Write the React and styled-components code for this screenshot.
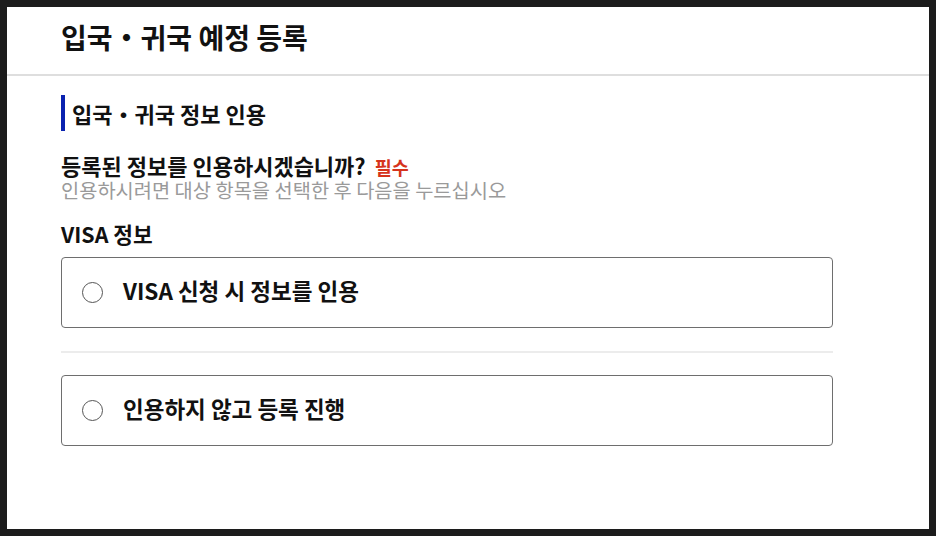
import React from "react";
import styled, { createGlobalStyle } from "styled-components";

const Global = createGlobalStyle`
  html, body { margin: 0; padding: 0; background: #1c1c1c; }
  body { font-family: "Noto Sans CJK KR", "Noto Sans", sans-serif; color: #111; }
  * { box-sizing: border-box; }
`;

const Frame = styled.div`
  width: 936px;
  height: 536px;
  padding: 7px;
  background: #1c1c1c;
`;

const Page = styled.div`
  width: 922px;
  height: 522px;
  background: #fff;
  display: flex;
  flex-direction: column;
`;

const Header = styled.header`
  height: 69px;
  display: flex;
  align-items: center;
  padding: 0 0 8px 54px;
  border-bottom: 2px solid #dedede;
`;

const Title = styled.h1`
  margin: 0;
  font-size: 28px;
  font-weight: 700;
  line-height: 1;
  color: #111;
`;

const Main = styled.main`
  padding: 19px 0 0 54px;
  width: 826px;
  display: flex;
  flex-direction: column;
`;

const SectionHeading = styled.h2`
  margin: 0;
  height: 36px;
  display: flex;
  align-items: center;
  gap: 7px;
  font-size: 22px;
  font-weight: 700;
  line-height: 1;
  &::before {
    content: "";
    width: 4px;
    height: 36px;
    background: #0a22b0;
  }
`;

const Question = styled.p`
  margin: 22px 0 0;
  height: 25px;
  font-size: 22px;
  font-weight: 700;
  line-height: 25px;
  display: flex;
  align-items: baseline;
  gap: 9px;
`;

const Required = styled.span`
  color: #d6331c;
  font-size: 18.5px;
  font-weight: 700;
`;

const Hint = styled.p`
  margin: 0;
  height: 24px;
  font-size: 19.8px;
  line-height: 24px;
  color: #9a9a9a;
  font-weight: 400;
`;

const GroupLabel = styled.h3`
  margin: 20px 0 0;
  font-size: 21.4px;
  font-weight: 700;
  line-height: 24px;
`;

const Option = styled.label`
  display: flex;
  align-items: center;
  gap: 20px;
  height: 71px;
  margin-top: ${(p) => p.$top}px;
  padding: 0 0 6px 20px;
  border: 1px solid #6e6e6e;
  border-radius: 4px;
  font-size: 22.5px;
  font-weight: 700;
  cursor: pointer;
`;

const Radio = styled.span`
  width: 21px;
  height: 21px;
  border-radius: 50%;
  border: 1.2px solid #555;
  flex: none;
  margin-top: 6px;
`;

const Divider = styled.hr`
  margin: 23px 0 0;
  border: 0;
  border-top: 2px solid #ececec;
`;

export default function App() {
  return (
    <>
      <Global />
      <Frame>
        <Page>
          <Header>
            <Title>입국・귀국 예정 등록</Title>
          </Header>
          <Main>
            <SectionHeading>입국・귀국 정보 인용</SectionHeading>
            <Question>
              등록된 정보를 인용하시겠습니까?<Required>필수</Required>
            </Question>
            <Hint>인용하시려면 대상 항목을 선택한 후 다음을 누르십시오</Hint>
            <GroupLabel>VISA 정보</GroupLabel>
            <Option $top={11}>
              <Radio />
              VISA 신청 시 정보를 인용
            </Option>
            <Divider />
            <Option $top={22}>
              <Radio />
              인용하지 않고 등록 진행
            </Option>
          </Main>
        </Page>
      </Frame>
    </>
  );
}
